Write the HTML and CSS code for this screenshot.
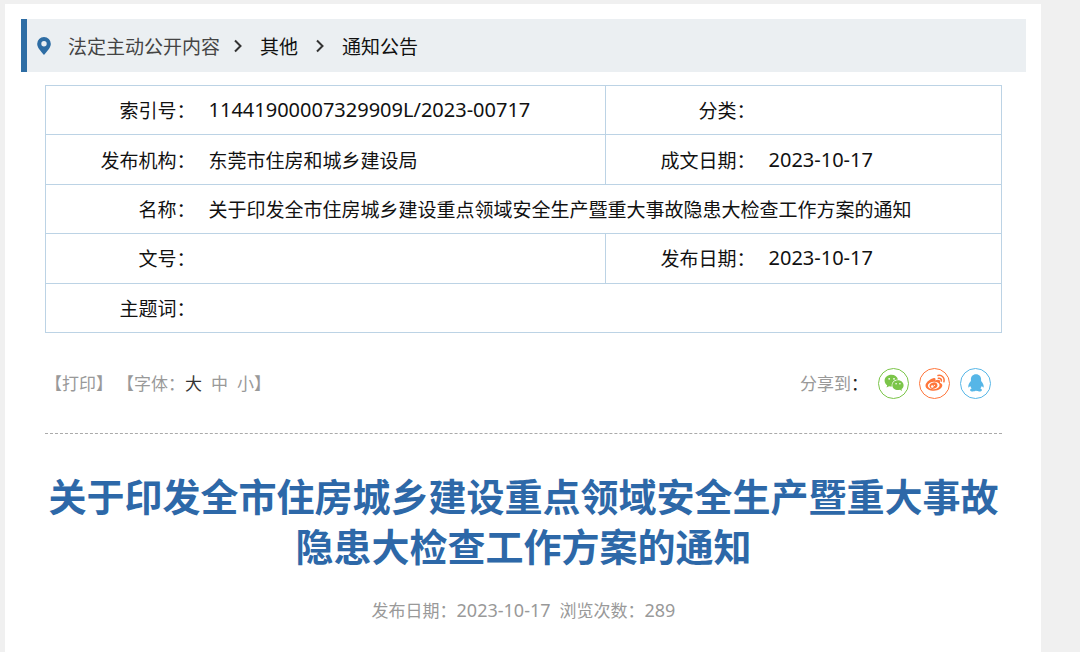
FILE: index.html
```html
<!DOCTYPE html>
<html lang="zh-CN">
<head>
<meta charset="utf-8">
<meta name="viewport" content="width=device-width, initial-scale=1">
<title>关于印发全市住房城乡建设重点领域安全生产暨重大事故隐患大检查工作方案的通知</title>
<link rel="stylesheet" href="styles.css">
</head>
<body>
<main class="page">
  <nav class="breadcrumb" aria-label="当前位置">
    <svg class="pin" viewBox="0 0 14 18" aria-hidden="true"><path fill-rule="evenodd" d="M7 0a6.8 6.8 0 0 0-6.8 6.9C.2 10.500 3.500 13.500 7 18c3.500-4.500 6.800-7.500 6.800-11.100A6.800 6.800 0 0 0 7 0zm0 4a2.700 2.700 0 1 1 0 5.400A2.700 2.700 0 0 1 7 4z"/></svg>
    <a class="crumb crumb-root" href="#">法定主动公开内容</a>
    <svg class="chevron" viewBox="0 0 8 14" aria-hidden="true"><path d="M1 1.500 6.500 7 1 12.500"/></svg>
    <a class="crumb" href="#">其他</a>
    <svg class="chevron" viewBox="0 0 8 14" aria-hidden="true"><path d="M1 1.500 6.500 7 1 12.500"/></svg>
    <a class="crumb" href="#">通知公告</a>
  </nav>

  <div class="content">
    <table class="info">
      <colgroup><col class="col-label"><col><col class="col-label"><col class="col-date"></colgroup>
      <tbody>
        <tr><th scope="row">索引号：</th><td class="num">11441900007329909L/2023-00717</td><th scope="row">分类：</th><td></td></tr>
        <tr><th scope="row">发布机构：</th><td>东莞市住房和城乡建设局</td><th scope="row">成文日期：</th><td class="num">2023-10-17</td></tr>
        <tr><th scope="row">名称：</th><td colspan="3">关于印发全市住房城乡建设重点领域安全生产暨重大事故隐患大检查工作方案的通知</td></tr>
        <tr><th scope="row">文号：</th><td></td><th scope="row">发布日期：</th><td class="num">2023-10-17</td></tr>
        <tr><th scope="row">主题词：</th><td colspan="3"></td></tr>
      </tbody>
    </table>

    <div class="toolbar">
      <div class="tools">
        <button class="tool" type="button">【打印】</button>
        <div class="sizes">
          <span>【字体：</span>
          <button class="tool active" type="button">大</button>
          <button class="tool size" type="button">中</button>
          <button class="tool size" type="button">小</button>
          <span>】</span>
        </div>
      </div>
      <div class="share">
        <span class="share-label">分享到<span class="colon">：</span></span>
        <a class="share-link wechat" href="#" aria-label="微信">
          <svg viewBox="0 0 20 18" aria-hidden="true"><path fill="currentColor" d="M7.500.8C3.600.8.600 3.400.600 6.700c0 1.900 1 3.500 2.600 4.600l-.7 2.200 2.600-1.300c.8.200 1.600.4 2.400.4h.4C7 8.600 9.900 5.500 14 5.400 13.200 2.700 10.600.8 7.500.8z"/><path fill="currentColor" d="M14 6.300c-3.200 0-5.700 2.200-5.700 4.900s2.500 4.900 5.700 4.900c.7 0 1.400-.1 2-.3l2 1.100-.5-1.800c1.300-.9 2.100-2.300 2.100-3.900 0-2.700-2.500-4.900-5.600-4.900z"/><g fill="#fff"><circle cx="5.200" cy="4.800" r=".9"/><circle cx="10" cy="4.800" r=".9"/><circle cx="12.100" cy="9.700" r=".8"/><circle cx="15.900" cy="9.700" r=".8"/></g></svg>
        </a>
        <a class="share-link weibo" href="#" aria-label="微博">
          <svg viewBox="0 0 20 18" aria-hidden="true"><path fill="currentColor" d="M8.200 4.200c1.200-.5 2.200-.2 2.300.7.100.5-.1 1-.2 1.500 1.900-.8 3.900-.9 4.600.2.400.6.300 1.300 0 2.100 1.400.4 2.400 1.300 2.400 2.600 0 2.800-3.700 5.400-8.300 5.400C4.300 16.700.500 14.600.500 11.400c0-2.500 3.600-6 7.700-7.200z"/><ellipse cx="8.700" cy="11.500" rx="5.900" ry="3.700" fill="#fff" transform="rotate(-6 8.700 11.500)"/><ellipse cx="8.500" cy="11.700" rx="4" ry="3.100" fill="currentColor" transform="rotate(-20 8.500 11.700)"/><circle cx="7.300" cy="12.500" r="1.300" fill="#fff"/><circle cx="9.500" cy="11.300" r=".6" fill="#fff"/><g fill="none" stroke="currentColor" stroke-linecap="round" stroke-width="1.500"><path d="M13 1.500c3.600-.9 7 2.100 5.900 6.200"/><path d="M13.400 4.300c1.900-.4 3.400 1 2.900 2.800"/></g></svg>
        </a>
        <a class="share-link qq" href="#" aria-label="QQ">
          <svg viewBox="0 0 20 18" aria-hidden="true"><path fill="currentColor" d="M10 .3C6.700.3 4.900 2.700 4.900 5.400v1.700C3.500 8.800 2.100 11 2.300 12.900c.1 1 .8.700 1.900-.8.300 1 .8 1.800 1.500 2.500-1.100.4-1.700 1-1.600 1.700.1 1.500 4.500 1.600 5.900.3 1.400 1.300 5.800 1.200 5.900-.3.100-.7-.5-1.300-1.600-1.700.7-.7 1.200-1.500 1.500-2.500 1.100 1.500 1.800 1.800 1.900.8.200-1.900-1.200-4.100-2.600-5.800V5.400C15.100 2.700 13.300.3 10 .3z"/></svg>
        </a>
      </div>
    </div>

    <article class="article">
      <h1 class="title">关于印发全市住房城乡建设重点领域安全生产暨重大事故隐患大检查工作方案的通知</h1>
      <p class="meta"><span>发布日期：<span class="meta-num">2023-10-17</span></span><span>浏览次数：<span class="meta-num">289</span></span></p>
    </article>
  </div>
</main>
</body>
</html>
```
FILE: styles.css
```css
* {
  box-sizing: border-box;
}

body {
  margin: 0;
  background: #f0f0f0;
  color: #111;
  font-family: "Noto Sans CJK SC", sans-serif;
  font-size: 19px;
  line-height: 28px;
  text-spacing-trim: space-all;
}

a {
  color: inherit;
  text-decoration: none;
}

.page {
  min-height: calc(100vh - 4px);
  margin: 4px 39px 0 5px;
  padding: 15px 15px 24px 16px;
  background: #fff;
}

.breadcrumb {
  display: flex;
  align-items: center;
  height: 53px;
  padding-left: 10px;
  border-left: 6px solid #2e6da4;
  background: #ebeff2;
}

.pin {
  width: 14px;
  height: 18px;
  margin-right: 17px;
  fill: #2e6da4;
}

.crumb-root {
  color: #444;
}

.chevron {
  width: 8px;
  height: 14px;
  margin: 0 18px;
  fill: none;
  stroke: #333;
  stroke-width: 2;
}

.crumb-root + .chevron {
  margin-left: 14px;
}

.content {
  padding: 13px 24px 0;
}

.info {
  width: 100%;
  height: 248px;
  border-collapse: collapse;
  table-layout: fixed;
}

.col-label {
  width: 156px;
}

.col-date {
  width: 240px;
}

.info th,
.info td {
  padding: 0;
  border: 1px solid #bcd3e5;
  font-weight: 400;
}

.info th {
  padding-right: 6px;
  border-right: 0;
  text-align: right;
}

.info td {
  padding-left: 7px;
  border-left: 0;
}

.info .num {
  font-family: "Noto Sans", sans-serif;
  font-size: 20px;
}

.toolbar {
  display: flex;
  align-items: center;
  justify-content: space-between;
  height: 101px;
  border-bottom: 1px dashed #aaa;
  color: #999;
  font-size: 17px;
}

.tools,
.sizes,
.share {
  display: flex;
  align-items: center;
}

.tools {
  gap: 4px;
}

.tool {
  padding: 0;
  border: 0;
  background: none;
  color: inherit;
  font: inherit;
  cursor: pointer;
}

.active {
  color: #333;
}

.size {
  margin-left: 9px;
}

.share {
  gap: 10px;
  padding-right: 11px;
}

.colon {
  color: #222;
}

.share-link {
  display: flex;
  align-items: center;
  justify-content: center;
  width: 31px;
  height: 31px;
  border: 1px solid currentColor;
  border-radius: 50%;
}

.share-link svg {
  width: 20px;
  height: 18px;
}

.wechat {
  color: #7bc549;
}

.weibo {
  color: #ff763b;
}

.qq {
  color: #56b6e7;
}

.title {
  margin: 36px 0 0;
  color: #2d68a8;
  font-size: 38px;
  font-weight: 700;
  line-height: 50px;
  text-align: center;
}

.meta {
  display: flex;
  justify-content: center;
  gap: 9px;
  margin: 26px 0 0;
  color: #999;
  font-size: 17px;
}

.meta-num {
  font-family: "Noto Sans", sans-serif;
  font-size: 18px;
}
```
